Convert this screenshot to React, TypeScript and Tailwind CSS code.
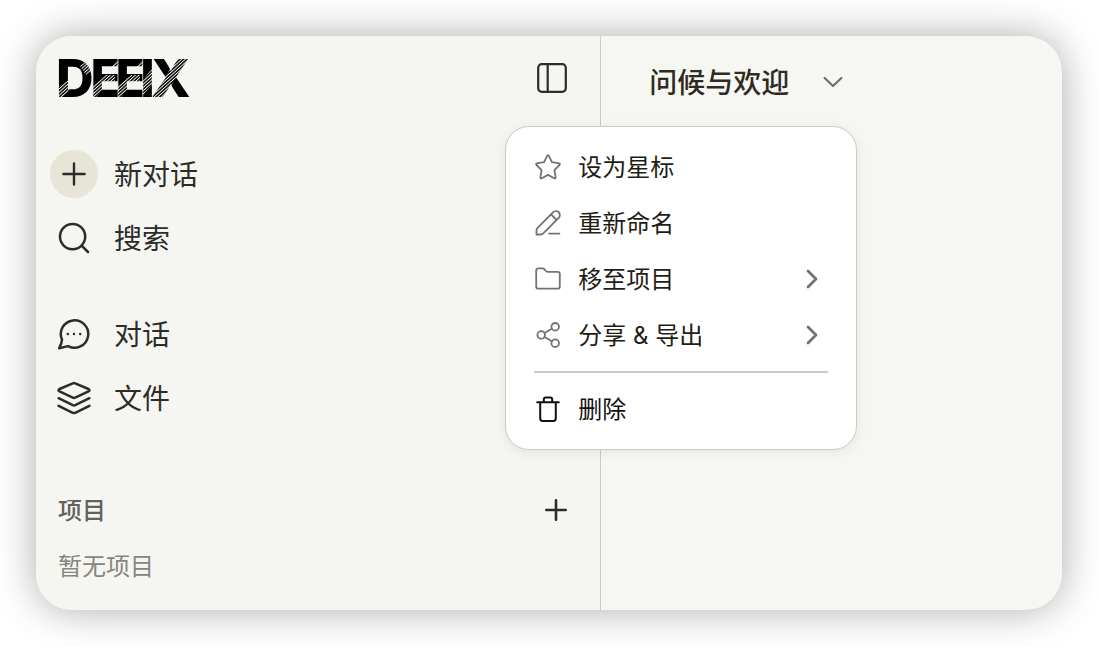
import type { ReactNode } from "react";

function Icon({ size, stroke, children }: { size: number; stroke: number; children: ReactNode }) {
  return (
    <svg
      width={size}
      height={size}
      viewBox={`0 0 ${size} ${size}`}
      fill="none"
      stroke="currentColor"
      strokeWidth={stroke}
      strokeLinecap="round"
      strokeLinejoin="round"
      className="shrink-0"
      aria-hidden="true"
    >
      {children}
    </svg>
  );
}

function PlusIcon() {
  return (
    <Icon size={24} stroke={2.4}>
      <path d="M12 1.4v21.2M1.4 12h21.2" />
    </Icon>
  );
}

// Heavy wordmark with the letters touching, cut by diagonal hatching
function Logo() {
  return (
    <svg width="144" height="70" viewBox="-8 -14 144 70" role="img" aria-label="DEEIX">
      <defs>
        <pattern id="hatch" width="2.4" height="2.4" patternUnits="userSpaceOnUse" patternTransform="rotate(-42)">
          <rect width="2.4" height="0.95" fill="#f5f6f1" />
        </pattern>
      </defs>
      <text x="-2 32 57 82 93" y="40" fontSize="52" fontWeight="800" className="font-['Inter',sans-serif]">
        DEEIX
      </text>
      <path d="M35 0v42M60 0v42M84.7 0v42M94.4 0v42" stroke="#f5f6f1" strokeWidth="0.7" />
      <g fill="url(#hatch)">
        <path d="M0 30 12 22v10L4 42H0zM22 9l8-6 6 9-8 6z" />
        <path d="M35 29 48 18h9v7h-8L38 41h-3zM53 10l7-8v8z" />
        <path d="M60 29 73 18h9v7h-8L63 41h-3zM78 10l7-8v8z" />
        <path d="M85 22 94 12v16L85 38z" />
        <path d="M94 41 119 1h12l-26 40z" />
      </g>
    </svg>
  );
}

function NavItem({ icon, label, active }: { icon: ReactNode; label: string; active?: boolean }) {
  return (
    <li>
      <a href="#" className="flex h-12 items-center gap-4 text-[28px] leading-10">
        <span
          className={
            active
              ? "flex size-12 items-center justify-center rounded-full bg-[#e8e4d6]"
              : "flex size-12 items-center justify-center"
          }
        >
          {icon}
        </span>
        <span className="pt-0.5">{label}</span>
      </a>
    </li>
  );
}

function MenuItem({ icon, label, more }: { icon: ReactNode; label: string; more?: boolean }) {
  return (
    <button
      type="button"
      role="menuitem"
      className="flex h-14 w-full items-center gap-4 pr-8 pl-7 text-left text-2xl text-[#1e1e15]"
    >
      <span className="text-[#73736e]">{icon}</span>
      <span className="flex-1 pt-0.5">{label}</span>
      {more && (
        <span className="text-[#73736e]">
          <Icon size={24} stroke={2.8}>
            <path d="M8 4l8 8-8 8" />
          </Icon>
        </span>
      )}
    </button>
  );
}

function Sidebar() {
  return (
    <aside className="flex basis-[55.1%] flex-col border-r border-[#cbccc7] bg-[#f5f6f1] rounded-l-[36px] pb-5 text-[#2c2c29]">
      <div className="flex h-[84px] items-center justify-between pr-6 pl-3.5">
        <Logo />
        <button type="button" aria-label="收起侧边栏" className="flex size-12 items-center justify-center">
          <Icon size={32} stroke={2.2}>
            <rect x="2.2" y="2.2" width="27.6" height="27.6" rx="3.5" />
            <path d="M11.7 2.2v27.6" />
          </Icon>
        </button>
      </div>

      <nav className="mt-[30px] flex flex-col gap-12 px-3.5">
        <ul className="flex flex-col gap-4">
          <NavItem active label="新对话" icon={<PlusIcon />} />
          <NavItem
            label="搜索"
            icon={
              <Icon size={32} stroke={2.5}>
                <circle cx="14.6" cy="14.6" r="12.6" />
                <path d="M23.6 23.6l6.4 6.4" />
              </Icon>
            }
          />
        </ul>
        <ul className="flex flex-col gap-4">
          <NavItem
            label="对话"
            icon={
              <Icon size={32} stroke={2.5}>
                <path d="M4 21.6A13.7 13.7 0 1 1 10 28.1L1.2 30.2C2.8 27.4 3.8 25 4 21.6z" />
                <path d="M9.8 16h.01M16 16h.01M22.2 16h.01" />
              </Icon>
            }
          />
          <NavItem
            label="文件"
            icon={
              <Icon size={34} stroke={2.5}>
                <path d="M15.8 2.3Q17 1.7 18.2 2.3L31.5 8Q33.4 9.3 31.5 10.4L18.2 16.7Q17 17.3 15.8 16.7L2.5 10.4Q.6 9.3 2.5 8z" />
                <path d="M1.6 17.2l14.2 6.9q1.2.6 2.4 0l14.2-6.9M1.6 24.9l14.2 6.9q1.2.6 2.4 0l14.2-6.9" />
              </Icon>
            }
          />
        </ul>
      </nav>

      <section className="mt-16 flex flex-col gap-2 pr-5 pl-[22px]">
        <div className="flex h-12 items-center justify-between">
          <h2 className="pt-0.5 text-2xl font-medium text-[#62625c]">项目</h2>
          <button type="button" aria-label="新建项目" className="flex size-12 items-center justify-center">
            <Icon size={24} stroke={2.6}>
              <path d="M12 2.3v19.4M2.3 12h19.4" />
            </Icon>
          </button>
        </div>
        <p className="flex h-12 items-center pt-0.5 text-2xl text-[#868681]">暂无项目</p>
      </section>
    </aside>
  );
}

function TitleMenu() {
  return (
    <div
      role="menu"
      className="absolute top-[90px] -left-24 w-[352px] rounded-3xl border border-[#cbccc7] bg-white py-3 shadow-[0_2px_12px_rgba(0,0,0,0.08)]"
    >
      <MenuItem
        label="设为星标"
        icon={
          <Icon size={28} stroke={1.8}>
            <path d="M13.1 2.9Q14 1.3 14.9 2.9L17.9 9.2 25 10.3Q26.7 10.7 25.5 12L20.4 17.2 21.6 24.3Q21.8 26 20.2 25.2L14 21.9 7.8 25.2Q6.2 26 6.4 24.3L7.6 17.2 2.5 12Q1.3 10.7 3 10.3L10.1 9.2z" />
          </Icon>
        }
      />
      <MenuItem
        label="重新命名"
        icon={
          <Icon size={28} stroke={1.8}>
            <path d="M2.5 25.7v-4.3q.1-1.5 1.1-2.6L19 3.3a3.9 3.9 0 0 1 5.7 5.6L9.3 24.4q-1.1 1-2.6 1.1zM17 5.4l5.6 5.6M15 24.6h10.4" />
          </Icon>
        }
      />
      <MenuItem
        more
        label="移至项目"
        icon={
          <Icon size={28} stroke={1.8}>
            <path d="M4.5 3.3h4.2q1 0 1.6.8L11.9 6q.7.8 1.7.8h9.9q2.3 0 2.3 2.3v12.3q0 2.3-2.3 2.3h-19q-2.3 0-2.3-2.3V5.6q0-2.3 2.3-2.3z" />
          </Icon>
        }
      />
      <MenuItem
        more
        label="分享 & 导出"
        icon={
          <Icon size={28} stroke={1.8}>
            <circle cx="7.2" cy="14" r="3.8" />
            <circle cx="21.2" cy="5.8" r="3.8" />
            <circle cx="21.2" cy="22.2" r="3.8" />
            <path d="M10.5 12.1l7.4-4.4M10.5 15.9l7.4 4.4" />
          </Icon>
        }
      />
      <hr className="mx-7 my-2 border-t-2 border-[#cbccc7]" />
      <button
        type="button"
        role="menuitem"
        className="flex h-14 w-full items-center gap-4 pr-8 pl-7 text-left text-2xl text-[#111]"
      >
        <Icon size={28} stroke={2}>
          <path d="M3.2 7.2h21.6M6.2 7.2v16.4q0 2.4 2.4 2.4h10.8q2.4 0 2.4-2.4V7.2M9.8 7.2V4.4q0-2 2-2h4.4q2 0 2 2v2.8" />
        </Icon>
        <span className="pt-0.5">删除</span>
      </button>
    </div>
  );
}

export default function App() {
  return (
    <div className="flex min-h-screen bg-white p-9 font-['Inter','Noto_Sans_CJK_SC',sans-serif]">
      <div className="flex flex-1 rounded-[36px] bg-[#f6f7f2] shadow-[0_0_40px_rgba(0,0,0,0.33)]">
        <Sidebar />
        <main className="relative flex-1">
          <header className="flex h-[92px] items-center pl-12">
            <button
              type="button"
              aria-haspopup="menu"
              aria-expanded="true"
              className="flex items-center gap-8 text-[28px] leading-10 font-medium text-[#2f2b20]"
            >
              <span className="pt-0.5">问候与欢迎</span>
              <span className="text-[#6f6f6a]">
                <Icon size={24} stroke={2.2}>
                  <path d="M3.6 8l8.4 8 8.4-8" />
                </Icon>
              </span>
            </button>
          </header>
          <TitleMenu />
        </main>
      </div>
    </div>
  );
}
